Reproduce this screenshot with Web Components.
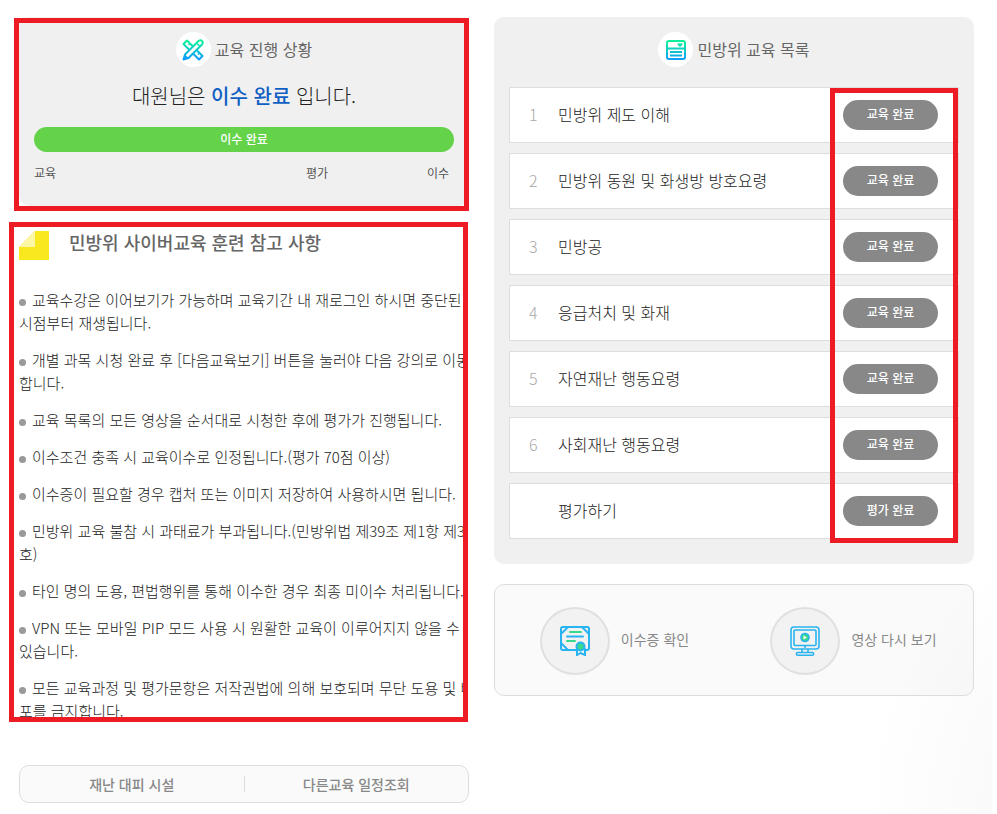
<!DOCTYPE html>
<html lang="ko">
<head>
<meta charset="utf-8">
<meta name="viewport" content="width=device-width, initial-scale=1">
<title>민방위 사이버교육</title>
<style>
body {
  margin: 0;
  background: #fff;
  color: #222;
  font: 300 15px/23px "Noto Sans CJK KR", "Noto Sans", sans-serif;
}
</style>
</head>
<body>
<edu-page>
  <edu-progress slot="left" name="대원님" state="이수 완료"></edu-progress>
  <edu-notice slot="left">
    <span slot="title">민방위 사이버교육 훈련 참고 사항</span>
    <notice-item>교육수강은 이어보기가 가능하며 교육기간 내 재로그인 하시면 중단된 시점부터 재생됩니다.</notice-item>
    <notice-item>개별 과목 시청 완료 후 [다음교육보기] 버튼을 눌러야 다음 강의로 이동합니다.</notice-item>
    <notice-item>교육 목록의 모든 영상을 순서대로 시청한 후에 평가가 진행됩니다.</notice-item>
    <notice-item>이수조건 충족 시 교육이수로 인정됩니다.(평가 70점 이상)</notice-item>
    <notice-item>이수증이 필요할 경우 캡처 또는 이미지 저장하여 사용하시면 됩니다.</notice-item>
    <notice-item>민방위 교육 불참 시 과태료가 부과됩니다.(민방위법 제39조 제1항 제3호)</notice-item>
    <notice-item>타인 명의 도용, 편법행위를 통해 이수한 경우 최종 미이수 처리됩니다.</notice-item>
    <notice-item>VPN 또는 모바일 PIP 모드 사용 시 원활한 교육이 이루어지지 않을 수 있습니다.</notice-item>
    <notice-item>모든 교육과정 및 평가문항은 저작권법에 의해 보호되며 무단 도용 및 배포를 금지합니다.</notice-item>
  </edu-notice>
  <link-bar slot="left"></link-bar>

  <course-list slot="right">
    <course-row no="1" state="교육 완료">민방위 제도 이해</course-row>
    <course-row no="2" state="교육 완료">민방위 동원 및 화생방 방호요령</course-row>
    <course-row no="3" state="교육 완료">민방공</course-row>
    <course-row no="4" state="교육 완료">응급처치 및 화재</course-row>
    <course-row no="5" state="교육 완료">자연재난 행동요령</course-row>
    <course-row no="6" state="교육 완료">사회재난 행동요령</course-row>
    <course-row state="평가 완료">평가하기</course-row>
  </course-list>
  <quick-menu slot="right">
    <quick-link icon="cert">이수증 확인</quick-link>
    <quick-link icon="video">영상 다시 보기</quick-link>
  </quick-menu>
</edu-page>

<script>
"use strict";
const GRAD = `<defs><linearGradient id="g" gradientUnits="userSpaceOnUse" x1="0" y1="2" x2="0" y2="20">
  <stop offset="0" stop-color="#0df29a"/><stop offset="1" stop-color="#0d9bff"/>
</linearGradient></defs>`
const ICONS = {
  tools: `<svg width="22" height="22" viewBox="0 0 22 22" fill="none" stroke="url(#g)" stroke-width="2" stroke-linejoin="round">${GRAD}
    <path d="M5 1.5 1.5 5 17 20.5 20.5 17Z"/>
    <path d="M8 4.500 6.500 6M17.500 14 16 15.500" stroke-width="1.500"/>
    <path fill="#fff" d="M16.500 2Q18.500 .5 20 2T20 5.500L6.500 19 1.500 20.500 3 15.500Z"/>
    <path d="M14.500 4 18 7.500" stroke-width="1.500"/>
    <path fill="url(#g)" stroke="none" d="M3 15.500 6.500 19 1.500 20.500Z"/></svg>`,
  list: `<svg width="20" height="20" viewBox="0 0 20 20" fill="none" stroke="url(#g)" stroke-width="2">${GRAD}
    <rect x="1" y="1" width="18" height="18" rx="2"/><path d="M1 8.500H19"/>
    <path d="M4 12H16M4 15.500H16" stroke-width="2"/>
    <path fill="url(#g)" stroke="none" d="M14 7 11.500 4.800Q11.500 3 13 3L14 3.800 15 3Q16.500 3 16.500 4.800Z"/></svg>`,
  cert: `<svg width="30" height="30" viewBox="0 0 30 30" fill="none" stroke="#28b4f0" stroke-width="2" stroke-linecap="round">
    <path d="M16 24H3Q1 24 1 22V3Q1 1 3 1H27Q29 1 29 3V22Q29 24 27 24H26"/>
    <path d="M1 8 8 1M22 1 29 8M1 17 8 24" stroke-width="1.800"/><path d="M7 10.500H23"/>
    <path stroke="#37d98c" d="M10 6H21M7 15H15"/>
    <path d="M17 23V29L20.500 27 25 29V23"/>
    <circle cx="20.500" cy="20.500" r="4" fill="#37d98c"/></svg>`,
  video: `<svg width="30" height="30" viewBox="0 0 30 30" fill="none" stroke="#28b4f0" stroke-width="1.600">
    <rect x="1" y="1" width="28" height="22" rx="3"/><rect x="4" y="4" width="22" height="15.500" rx="1"/>
    <path d="M12 23V27M18 23V27M15 20V22"/><rect x="6.500" y="26.500" width="17" height="2.700" rx="1"/>
    <circle cx="15" cy="11.500" r="4" fill="#37d98c"/>
    <path fill="#fff" stroke="none" d="M13.500 9.500V13.500L17 11.500Z"/></svg>`
}
// red box drawn over the content
const MARK = `
.mark {
  position: absolute;
  box-sizing: border-box;
  border: 5px solid #ed1c24;
  pointer-events: none;
}`
const TITLE = `
h2 {
  display: flex;
  align-items: center;
  justify-content: center;
  gap: 4px;
  margin: 0;
  color: #666;
  font-size: 16px;
  font-weight: 400;
}
h2 i {
  display: grid;
  place-items: center;
  width: 35px;
  height: 35px;
  border-radius: 50%;
  background: #fff;
}`

class Base extends HTMLElement {
  constructor() {
    super();
    let sr = this.attachShadow({mode: 'open'})
    sr.innerHTML = this.code()
  }
}

customElements.define('edu-page', class extends Base {
  code() { return `<style>
:host {
  display: block;
  box-sizing: border-box;
  min-height: 100vh;
  margin-right: 5px;
  padding: 17px 18px 11px 19px;
  background: radial-gradient(circle 309px at calc(100% + 179px) 100%, #f3f3f3, #fff);
}
main {
  display: grid;
  grid-template-columns: 450fr 480fr;
  gap: 25px;
}
section {
  display: flex;
  flex-direction: column;
  min-width: 0;
}
.left { gap: 21px; }
.right { gap: 20px; }
</style>
<main>
  <section class="left"><slot name="left"></slot></section>
  <section class="right"><slot name="right"></slot></section>
</main>` }
})

customElements.define('edu-progress', class extends Base {
  code() { return `<style>
${MARK}
${TITLE}
:host {
  display: block;
  position: relative;
  padding: 15px 15px 24px;
  border-radius: 10px;
  background: #f0f0f0;
}
p {
  margin: 14px 0 16px;
  font-size: 20px;
  line-height: 30px;
  text-align: center;
}
b {
  color: #0f5fc3;
  font-weight: 500;
}
.bar {
  padding-bottom: 1px;
  border-radius: 13px;
  background: #64d34a;
  color: #fff;
  font-size: 12px;
  font-weight: 500;
  line-height: 24px;
  text-align: center;
}
.steps {
  display: grid;
  grid-template-columns: 9fr 4fr auto;
  margin-top: 12px;
  padding-right: 5px;
  color: #555;
  font-size: 12px;
  font-weight: 400;
  line-height: 18px;
}
.mark { inset: 1px 0 -5px -5px; }
</style>
<h2><i>${ICONS.tools}</i>교육 진행 상황</h2>
<p>${this.getAttribute('name')}은 <b>${this.getAttribute('state')}</b> 입니다.</p>
<div class="bar" role="progressbar" aria-valuenow="100">${this.getAttribute('state')}</div>
<div class="steps"><span>교육</span><span>평가</span><span>이수</span></div>
<div class="mark"></div>` }
})

customElements.define('edu-notice', class extends Base {
  code() { return `<style>
${MARK}
:host {
  display: block;
  position: relative;
}
.scroll {
  max-height: 490px;
  margin-right: 5px;
  overflow: hidden;
}
header {
  display: flex;
  gap: 20px;
  margin-bottom: 28px;
  padding-top: 4px;
}
h3 {
  margin: 0;
  color: #666;
  font-size: 18px;
  font-weight: 500;
  line-height: 22px;
}
.list {
  display: flex;
  flex-direction: column;
  gap: 14px;
  margin-right: -11px;
}
.mark { inset: -5px 1px -5px -10px; }
</style>
<div class="scroll">
  <header>
    <svg width="30" height="29" viewBox="0 0 30 29">
      <path fill="#f9e81e" d="M16 0H30V29H0V16Z"/><path fill="#fdf6a5" d="M16 0V16H0Z"/>
    </svg>
    <h3><slot name="title"></slot></h3>
  </header>
  <div class="list" role="list"><slot></slot></div>
</div>
<div class="mark"></div>` }
})

customElements.define('notice-item', class extends Base {
  code() {
    this.role = 'listitem'
    return `<style>
:host { display: block; }
i {
  display: inline-block;
  width: 7px;
  height: 7px;
  margin-right: 6px;
  border-radius: 50%;
  background: #999;
}
</style><i></i><slot></slot>` }
})

customElements.define('link-bar', class extends Base {
  code() { return `<style>
:host {
  display: block;
  margin-top: 27px;
}
nav {
  display: flex;
  align-items: center;
  padding: 10px 0;
  border: 1px solid #ddd;
  border-radius: 10px;
  background: #fafafa;
}
a {
  flex: 1;
  color: #888;
  font-size: 14px;
  font-weight: 500;
  line-height: 16px;
  text-align: center;
  text-decoration: none;
}
a + a { border-left: 1px solid #ddd; }
</style>
<nav><a href="#shelter">재난 대피 시설</a><a href="#schedule">다른교육 일정조회</a></nav>` }
})

customElements.define('course-list', class extends Base {
  code() { return `<style>
${MARK}
${TITLE}
:host {
  display: block;
  padding: 15px 15px 25px;
  border-radius: 10px;
  background: #f0f0f0;
}
.rows {
  display: flex;
  flex-direction: column;
  gap: 10px;
  position: relative;
  margin-top: 20px;
}
.mark {
  inset: 1px 1px -4px auto;
  width: 128px;
}
</style>
<h2><i>${ICONS.list}</i>민방위 교육 목록</h2>
<div class="rows" role="list"><slot></slot><div class="mark"></div></div>` }
})

customElements.define('course-row', class extends Base {
  code() {
    this.role = 'listitem'
    return `<style>
:host {
  display: flex;
  align-items: center;
  padding: 12px 20px 12px 19px;
  border: 1px solid #ddd;
  background: #fff;
  font-size: 16px;
  line-height: 24px;
}
span { padding-bottom: 2px; }
.no {
  width: 29px;
  color: #aaa;
}
.name { flex: 1; }
button {
  width: 95px;
  height: 30px;
  padding: 0 0 2px;
  border: 0;
  border-radius: 15px;
  background: #888;
  color: #fff;
  font: inherit;
  font-size: 12px;
  font-weight: 500;
}
</style>
<span class="no">${this.getAttribute('no') || ''}</span>
<span class="name"><slot></slot></span>
<button type="button">${this.getAttribute('state')}</button>` }
})

customElements.define('quick-menu', class extends Base {
  code() { return `<style>
:host {
  display: flex;
  padding: 22px 0 20px;
  border: 1px solid #ddd;
  border-radius: 10px;
  background: rgba(0, 0, 0, .02);
}
</style><slot></slot>` }
})

customElements.define('quick-link', class extends Base {
  code() { return `<style>
:host { flex: 1; }
a {
  display: flex;
  align-items: center;
  justify-content: center;
  gap: 11px;
  color: #888;
  font-size: 14px;
  font-weight: 400;
  line-height: 20px;
  text-decoration: none;
}
span { padding-bottom: 4px; }
i {
  display: grid;
  place-items: center;
  box-sizing: border-box;
  width: 70px;
  height: 68px;
  border: 2px solid #e0e0e0;
  border-radius: 50%;
  background: #f2f2f2;
}
</style>
<a href="#${this.getAttribute('icon')}"><i>${ICONS[this.getAttribute('icon')]}</i><span><slot></slot></span></a>` }
})
</script>
</body>
</html>
